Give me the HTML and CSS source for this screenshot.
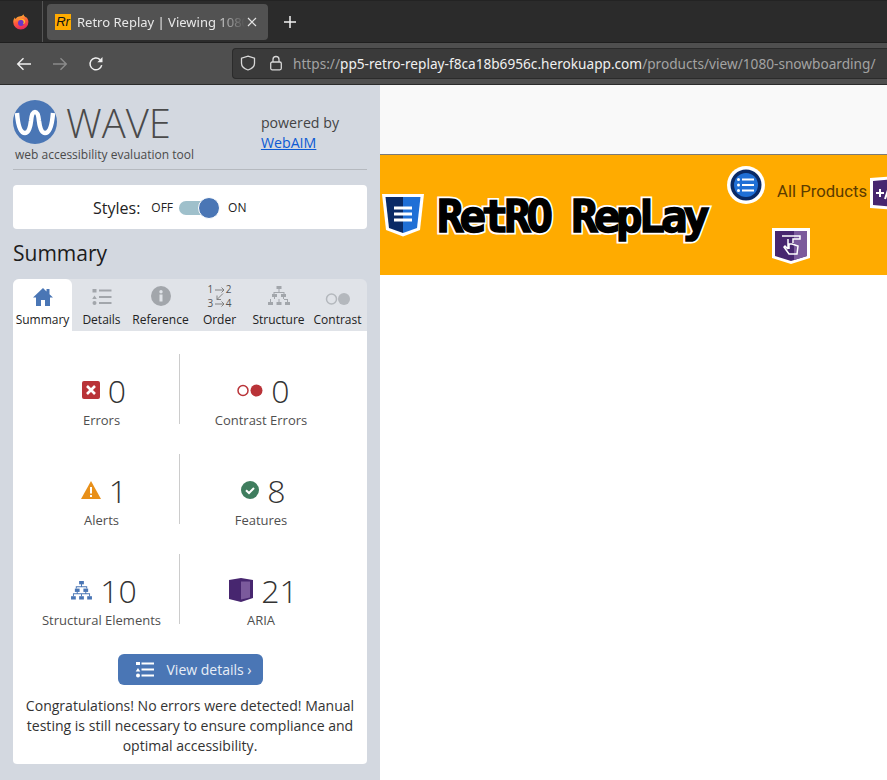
FILE: index.html
```html
<!DOCTYPE html>
<html lang="en">
<head>
    <meta charset="UTF-8">
    <title>Retro Replay | Viewing 1080 Snowboarding</title>
    <link rel="stylesheet" href="styles.css">
</head>
<body>
    <div class="tabbar">
        <div class="ff-slot">
            <svg width="16" height="16" viewBox="0 0 16 16">
                <defs>
                    <linearGradient id="ffg" x1="0.3" y1="0" x2="0.6" y2="1">
                        <stop offset="0" stop-color="#ffc12e"/>
                        <stop offset="0.5" stop-color="#ff5a3c"/>
                        <stop offset="1" stop-color="#e5235f"/>
                    </linearGradient>
                </defs>
                <path d="M10.500 0.300c.2 1.500 1.200 2 2.200 3 .5-.1.9.1 1.200.5.9 1.300 1.500 2.700 1.500 4.200a7.600 7.600 0 0 1-15.200 0c0-1.800.7-3.600 1.700-4.600.1.800.4 1.300.8 1.500.8-1.300 2-2 3.400-2.300 1.500-.3 3.500-.5 4.400-2.300z" fill="url(#ffg)"/>
                <circle cx="8" cy="9" r="3" fill="#6a35c9"/>
                <path d="M4.500 6.500c1.500-1.300 4.300-1.500 5.700.3.800 1 .6 2.700-.6 3.400 1.800-.1 2.700-1.500 2.500-3.200C11 4.500 6.500 4 4.500 6.500z" fill="#ffbd2e"/>
            </svg>
        </div>
        <div class="tab">
            <span class="favicon">Rr</span>
            <span class="tab-title">Retro Replay | Viewing 1080 Snowboarding</span>
            <svg class="tab-close" width="10" height="10" viewBox="0 0 10 10"><path d="M1 1l8 8M9 1l-8 8" stroke="#e4e4e4" stroke-width="1.200"/></svg>
        </div>
        <svg class="tab-new" width="14" height="14" viewBox="0 0 14 14"><path d="M7 1v12M1 7h12" stroke="#f2f2f2" stroke-width="1.500"/></svg>
    </div>

    <div class="toolbar">
        <div class="nav-icons">
            <svg width="16" height="16" viewBox="0 0 16 16"><path d="M15 8H2M7.500 2.200L1.700 8l5.800 5.800" fill="none" stroke="#f0f0f0" stroke-width="1.400"/></svg>
            <svg width="16" height="16" viewBox="0 0 16 16"><path d="M1 8h13M8.500 2.200L14.300 8l-5.800 5.800" fill="none" stroke="#8b8b8b" stroke-width="1.400"/></svg>
            <svg width="16" height="16" viewBox="0 0 16 16"><path d="M13.700 9.200A5.900 5.900 0 1 1 12 3.600" fill="none" stroke="#f0f0f0" stroke-width="1.500"/><path d="M14.500 1v5.200H9.300z" fill="#f0f0f0"/></svg>
        </div>
        <div class="urlbar">
            <svg width="16" height="16" viewBox="0 0 16 16"><path d="M8 1.200l6.500 2v5c0 3.300-3 5.600-6.500 6.800-3.500-1.200-6.500-3.500-6.500-6.800v-5z" fill="none" stroke="#d8d8d8" stroke-width="1.300"/></svg>
            <svg class="lock" width="14" height="16" viewBox="0 0 14 16"><rect x="1.700" y="7" width="10.600" height="7.800" rx="1.500" fill="none" stroke="#d8d8d8" stroke-width="1.300"/><path d="M4 7V4.500a3 3 0 0 1 6 0V7" fill="none" stroke="#d8d8d8" stroke-width="1.300"/></svg>
            <span class="url"><span class="url-dim">https://</span><span class="url-host">pp5-retro-replay-f8ca18b6956c.herokuapp.com</span><span class="url-dim">/products/view/1080-snowboarding/</span></span>
        </div>
    </div>

    <div class="main">
        <aside class="wave">
            <div class="wave-head">
                <div class="wave-brand">
                    <div class="wave-logo">
                        <svg width="44" height="44" viewBox="0 0 44 44">
                            <circle cx="22" cy="22" r="22" fill="#4a76b5"/>
                            <path d="M4 13c1 13 3.500 20 8 20s5.500-8 6-12c.5-5 1.500-9 4-9s3.500 4 4 9c.5 4 1.500 12 6 12s7-7 8-20" fill="none" stroke="#fff" stroke-width="4.500"/>
                        </svg>
                        <span class="wave-name">WAVE</span>
                    </div>
                    <div class="wave-tag">web accessibility evaluation tool</div>
                </div>
                <div class="wave-powered">powered by<br><a href="#">WebAIM</a></div>
            </div>

            <div class="styles-card">
                <span class="styles-label">Styles:</span>
                <span class="styles-state">OFF</span>
                <span class="toggle"><span class="toggle-knob"></span></span>
                <span class="styles-state">ON</span>
            </div>

            <h2 class="panel-title">Summary</h2>

            <div class="tabs">
                <div class="wtab wtab-active">
                    <svg width="20" height="18" viewBox="0 0 20 18"><path d="M10 0L0 9.500h3V18h5v-6h4v6h5V9.500h3l-3.500-3.300V1h-3v2.400z" fill="#4a76b5"/></svg>
                    <span>Summary</span>
                </div>
                <div class="wtab">
                    <svg width="20" height="18" viewBox="0 0 20 18" fill="#a2a6ab"><rect x="0.500" y="1" width="4" height="3.500"/><path d="M2.500 7.500l2.300 3.500H.2z"/><circle cx="2.500" cy="15" r="2"/><rect x="7" y="1.500" width="12.500" height="2"/><rect x="7" y="8" width="12.500" height="2"/><rect x="7" y="14" width="12.500" height="2"/></svg>
                    <span>Details</span>
                </div>
                <div class="wtab">
                    <svg width="20" height="20" viewBox="0 0 20 20"><circle cx="10" cy="10" r="10" fill="#a2a6ab"/><rect x="8.500" y="8.500" width="3" height="7" fill="#e0e3e8"/><circle cx="10" cy="5.700" r="1.700" fill="#e0e3e8"/></svg>
                    <span>Reference</span>
                </div>
                <div class="wtab">
                    <div class="order-icon">
                        <span>1</span><svg width="10" height="6" viewBox="0 0 10 6"><path d="M0 3h9M6.500 .5L9 3 6.500 5.500" fill="none" stroke="#777" stroke-width=".9"/></svg><span>2</span>
                        <svg class="order-cross" width="8" height="7" viewBox="0 0 8 7"><path d="M7 .5L1 6.500M1 2.500v4h4" fill="none" stroke="#777" stroke-width=".9"/></svg>
                        <span>3</span><svg width="10" height="6" viewBox="0 0 10 6"><path d="M0 3h9M6.500 .5L9 3 6.500 5.500" fill="none" stroke="#777" stroke-width=".9"/></svg><span>4</span>
                    </div>
                    <span>Order</span>
                </div>
                <div class="wtab">
                    <svg width="22" height="20" viewBox="0 0 22 20" fill="#a2a6ab"><rect x="8.500" y="0" width="5" height="3"/><rect x="4" y="8" width="5" height="3"/><rect x="13" y="8" width="5" height="3"/><rect x="0" y="16" width="5" height="3"/><rect x="8.500" y="16" width="5" height="3"/><rect x="17" y="16" width="5" height="3"/><path d="M10.500 3h1v3h5v2h-1V7h-9v1h-1V6h5zM6 11h1v2h8v-2h1v2h-4.500v3h-1v-3H7v0H3v3H2v-3h4zM16 13h4v3h-1v-2h-3z"/></svg>
                    <span>Structure</span>
                </div>
                <div class="wtab">
                    <svg width="26" height="14" viewBox="0 0 26 14"><circle cx="6.500" cy="7" r="5" fill="none" stroke="#b4b8bd" stroke-width="1.500"/><circle cx="19" cy="7" r="6" fill="#b4b8bd"/></svg>
                    <span>Contrast</span>
                </div>
            </div>

            <div class="panel">
                <div class="stats">
                    <div class="stat stat-left">
                        <div class="stat-top">
                            <svg width="18" height="18" viewBox="0 0 18 18"><rect width="18" height="18" rx="2" fill="#b93338"/><path d="M5 5l8 8M13 5l-8 8" stroke="#fff" stroke-width="2.600"/></svg>
                            <span class="stat-num">0</span>
                        </div>
                        <div class="stat-label">Errors</div>
                    </div>
                    <div class="stat">
                        <div class="stat-top">
                            <svg width="26" height="13" viewBox="0 0 26 13"><circle cx="6" cy="6.500" r="5" fill="none" stroke="#b93338" stroke-width="1.500"/><circle cx="19.500" cy="6.500" r="6" fill="#b93338"/></svg>
                            <span class="stat-num">0</span>
                        </div>
                        <div class="stat-label">Contrast Errors</div>
                    </div>
                    <div class="stat stat-left">
                        <div class="stat-top">
                            <svg width="20" height="18" viewBox="0 0 20 18"><path d="M10 0l10 18H0z" fill="#e8901a"/><rect x="9" y="6" width="2" height="6.500" fill="#fff"/><rect x="9" y="14" width="2" height="2" fill="#fff"/></svg>
                            <span class="stat-num">1</span>
                        </div>
                        <div class="stat-label">Alerts</div>
                    </div>
                    <div class="stat">
                        <div class="stat-top">
                            <svg width="18" height="18" viewBox="0 0 18 18"><circle cx="9" cy="9" r="9" fill="#3f7d5e"/><path d="M5 9.200l3 2.800 5-5" fill="none" stroke="#fff" stroke-width="2"/></svg>
                            <span class="stat-num">8</span>
                        </div>
                        <div class="stat-label">Features</div>
                    </div>
                    <div class="stat stat-left">
                        <div class="stat-top">
                            <svg width="21" height="19" viewBox="0 0 22 20" fill="#4a76b5"><rect x="8.500" y="0" width="5" height="3.500"/><rect x="4" y="8" width="5" height="3.500"/><rect x="13" y="8" width="5" height="3.500"/><rect x="0" y="16" width="5" height="3.500"/><rect x="8.500" y="16" width="5" height="3.500"/><rect x="17" y="16" width="5" height="3.500"/><path d="M10.500 3h1v2.500h5.500V8h-1V6.500H6V8H5V5.500h5.500zM6 11h1v2h8v-2h1v2h4v3h-1v-2h-7.500v2h-1v-2H3v2H2v-3h4z"/></svg>
                            <span class="stat-num">10</span>
                        </div>
                        <div class="stat-label">Structural Elements</div>
                    </div>
                    <div class="stat">
                        <div class="stat-top">
                            <svg width="24" height="24" viewBox="0 0 24 24"><path d="M0 2l12-2 12 2v18l-12 4-12-3z" fill="#47266f"/><path d="M12 3.500l9 0V19.500l-9 2z" fill="#7b5a9c"/></svg>
                            <span class="stat-num">21</span>
                        </div>
                        <div class="stat-label">ARIA</div>
                    </div>
                </div>

                <div class="details-row">
                    <a class="details-btn" href="#">
                        <svg width="20" height="16" viewBox="0 0 20 16" fill="#fff"><rect x="1" y="0" width="4" height="3"/><path d="M3 6l2.300 3.500H.7z"/><circle cx="3" cy="13.500" r="2"/><rect x="6.500" y="0.500" width="12.500" height="2"/><rect x="6.500" y="6.500" width="12.500" height="2"/><rect x="6.500" y="12.500" width="12.500" height="2"/></svg>
                        <span>View details ›</span>
                    </a>
                </div>
                <p class="congrats">Congratulations! No errors were detected! Manual testing is still necessary to ensure compliance and optimal accessibility.</p>
            </div>
        </aside>

        <div class="page">
            <div class="page-top"></div>
            <header class="site-head">
                <div class="site-logo">
                    <svg width="42" height="43" viewBox="0 0 42 43">
                        <path d="M0 0h42l-4 36-17 6.500L4 36z" fill="#fff"/>
                        <path d="M3.500 3h17.500v36L7 34z" fill="#0a2a66"/>
                        <path d="M21 3h17.500L35 34l-14 5z" fill="#1f6fd6"/>
                        <path d="M12 12.500h18v3H12zM12 18.500h18v3H12zM12 24.500h18v3H12z" fill="#fff"/>
                    </svg>
                    <span class="site-name" data-text="RetRO RepLay">RetRO RepLay</span>
                </div>
                <span class="site-link">All Products</span>
                <svg class="wave-mark mark-list" width="38" height="38" viewBox="0 0 38 38">
                    <circle cx="19" cy="19" r="19" fill="#fff"/>
                    <circle cx="19" cy="19" r="15.500" fill="#0a2a66"/>
                    <circle cx="19" cy="19" r="12" fill="#1f6fd6"/>
                    <path d="M15 12.500h12v2H15zM15 18h12v2H15zM15 23.500h12v2H15z" fill="#fff"/>
                    <circle cx="11.500" cy="13.500" r="1.500" fill="#fff"/><circle cx="11.500" cy="19" r="1.500" fill="#fff"/><circle cx="11.500" cy="24.500" r="1.500" fill="#fff"/>
                </svg>
                <svg class="wave-mark mark-plus" width="38" height="36" viewBox="0 0 38 36">
                    <path d="M0 3l38-3v36L0 33z" fill="#fff"/>
                    <path d="M3 6l32-3v30L3 30z" fill="#47266f"/>
                    <path d="M6 18h8M10 14v8" stroke="#fff" stroke-width="2"/>
                    <path d="M15 24l4-12 4 12" stroke="#fff" stroke-width="2" fill="none"/>
                </svg>
                <svg class="wave-mark mark-touch" width="38" height="38" viewBox="0 0 38 38">
                    <path d="M0 2h38v30l-19 6-19-6z" fill="#fff"/>
                    <path d="M3 5h32v25l-16 5-16-5z" fill="#47266f"/>
                    <path d="M22 5h13v25l-13 4z" fill="#7b5a9c"/>
                    <path d="M10 10h18v3H21v4M16 13v10M16 23l-3-3-1 1 5 7h8l1-8-6-2-3 0v5" fill="none" stroke="#fff" stroke-width="1.500"/>
                </svg>
            </header>
        </div>
    </div>
</body>
</html>
```

FILE: styles.css
```css
* {box-sizing: border-box}
html, body {
    margin: 0;
    padding: 0;
    height: 780px;
    overflow: hidden;
}
body {
    font-family: "Open Sans", Arial, sans-serif;
    background-color: #fff;
    color: #1c1c1c;
}

/* browser chrome */
.tabbar {
    height: 43px;
    background-color: #2b2b2b;
    border-top: 1px solid #232323;
    border-bottom: 1px solid #1f1f1f;
    display: flex;
    align-items: center;
}
.ff-slot {
    width: 43px;
    height: 100%;
    border-right: 1px solid #555;
    display: flex;
    align-items: center;
    justify-content: center;
}
.tab {
    width: 221px;
    height: 36px;
    margin-left: 4px;
    padding: 0 8px;
    background-color: #525252;
    border-radius: 4px;
    display: flex;
    align-items: center;
    color: #e8e8e8;
    font-family: "Noto Sans", sans-serif;
    font-size: 13px;
}
.favicon {
    width: 16px;
    height: 16px;
    flex: none;
    background-color: #ffab00;
    color: #111;
    font-family: "Liberation Sans", sans-serif;
    font-style: italic;
    font-size: 13px;
    line-height: 16px;
    text-align: center;
}
.tab-title {
    margin-left: 6px;
    width: 168px;
    flex: none;
    white-space: nowrap;
    overflow: hidden;
    -webkit-mask-image: linear-gradient(to right, #000 82%, transparent);
    mask-image: linear-gradient(to right, #000 82%, transparent);
}
.tab-close {
    margin-left: 2px;
    flex: none;
}
.tab-new {
    margin-left: 15px;
}
.toolbar {
    height: 42px;
    background-color: #4f4f4f;
    display: flex;
    align-items: center;
    border-bottom: 1px solid #2b2b2b;
}
.nav-icons {
    width: 232px;
    flex: none;
    padding-left: 16px;
    display: flex;
    gap: 20px;
}
.urlbar {
    flex: 1;
    height: 31px;
    margin-top: -1px;
    background-color: #3a3a3a;
    border: 1px solid #2b2b2b;
    border-right: none;
    border-radius: 4px 0 0 4px;
    padding-left: 7px;
    display: flex;
    align-items: center;
    overflow: hidden;
}
.lock {
    margin-left: 13px;
}
.url {
    margin-left: 10px;
    font-family: "Noto Sans", sans-serif;
    font-size: 13.650px;
    white-space: nowrap;
}
.url-dim {
    color: #a3a3a3;
}
.url-host {
    color: #f0f0f0;
}

.main {
    display: flex;
    height: 695px;
}

/* WAVE sidebar */
.wave {
    width: 380px;
    flex: none;
    background-color: #d3d8e0;
    padding: 15px 13px 0;
}
.wave-head {
    height: 70px;
    border-bottom: 1px solid #b5b9bf;
    display: flex;
}
.wave-logo {
    display: flex;
    align-items: center;
    height: 44px;
}
.wave-name {
    margin-left: 9px;
    padding-top: 2px;
    font-weight: 300;
    font-size: 40px;
    line-height: 40px;
    color: #4a4a4a;
}
.wave-tag {
    margin-left: 2px;
    margin-top: 3px;
    font-size: 12px;
    line-height: 16px;
    color: #4a4a4a;
}
.wave-powered {
    margin-left: 67px;
    margin-top: 13px;
    font-size: 14.200px;
    line-height: 20px;
    color: #444;
}
.wave-powered a {
    color: #0b5ad4;
}
.styles-card {
    height: 44px;
    margin-top: 15px;
    padding-top: 1px;
    padding-left: 80px;
    background-color: #fff;
    border-radius: 4px;
    display: flex;
    align-items: center;
    color: #222;
}
.styles-label {
    font-size: 16px;
    margin-right: 11px;
}
.styles-state {
    font-size: 12px;
}
.toggle {
    width: 38px;
    height: 14px;
    margin: 0 11px 0 6px;
    background-color: #9fc0cb;
    border-radius: 7px;
    position: relative;
}
.toggle-knob {
    position: absolute;
    right: -3px;
    top: -4px;
    width: 22px;
    height: 22px;
    border-radius: 50%;
    background-color: #4a76b5;
    border: 1px solid #fff;
}
.panel-title {
    margin: 9px 0 11px;
    font-size: 21px;
    line-height: 30px;
    font-weight: 400;
    color: #1c1c1c;
}
.tabs {
    height: 52px;
    display: flex;
    background-color: #e0e3e8;
    border-radius: 6px 6px 0 0;
}
.wtab {
    width: 59px;
    display: flex;
    flex-direction: column;
    align-items: center;
    justify-content: flex-end;
    font-size: 12px;
    line-height: 16px;
    padding-bottom: 3px;
    color: #222;
    white-space: nowrap;
}
.wtab svg {
    margin-bottom: 6px;
}
.wtab-active {
    background-color: #fff;
    border-radius: 6px 6px 0 0;
}
.order-icon {
    width: 24px;
    margin-bottom: 5px;
    display: flex;
    flex-wrap: wrap;
    justify-content: space-between;
    align-items: center;
    font-size: 10px;
    line-height: 7px;
    color: #555;
}
.order-icon svg {
    margin: 0;
}
.order-icon .order-cross {
    margin: 0 8px;
}
.panel {
    height: 433px;
    background-color: #fff;
    border-radius: 0 0 4px 4px;
    padding-top: 23px;
}
.stats {
    display: grid;
    grid-template-columns: 167px 162px;
    grid-auto-rows: 70px;
    row-gap: 30px;
}
.stat {
    display: flex;
    flex-direction: column;
    align-items: center;
    padding-top: 18px;
    color: #444;
}
.stat-left {
    border-right: 1px solid #ccc;
    padding-left: 11px;
}
.stat-top {
    height: 36px;
    padding-left: 5px;
    display: flex;
    align-items: center;
    justify-content: center;
    gap: 8px;
}
.stat-num {
    padding-top: 1px;
    font-size: 32px;
    font-weight: 300;
    line-height: 35px;
    color: #333;
}
.stat-label {
    font-size: 13px;
    line-height: 18px;
    margin-top: 3px;
    white-space: nowrap;
    color: #4f4f4f;
}
.details-row {
    margin-top: 30px;
    display: flex;
    justify-content: center;
}
.details-btn {
    width: 145px;
    height: 31px;
    background-color: #4a76b5;
    border-radius: 6px;
    color: #e8eef7;
    font-size: 14px;
    text-decoration: none;
    display: flex;
    align-items: center;
    padding-left: 17px;
    gap: 12px;
}
.congrats {
    margin: 11px 0 0;
    padding: 0 10px;
    text-align: center;
    font-size: 14.050px;
    line-height: 20px;
    color: #333;
}

/* page behind the sidebar */
.page {
    flex: 1;
    min-width: 0;
    overflow: hidden;
}
.page-top {
    height: 70px;
    background-color: #f9f9f9;
    border-bottom: 1px solid #7a7a7a;
}
.site-head {
    height: 120px;
    background-color: #ffab00;
    position: relative;
    display: flex;
}
.site-logo {
    margin-left: 2px;
    margin-top: 39px;
    display: flex;
    align-items: flex-start;
    gap: 13px;
}
.site-name {
    position: relative;
    z-index: 0;
    font-family: "DejaVu Sans Mono", monospace;
    font-weight: 700;
    font-size: 44px;
    line-height: 46px;
    letter-spacing: -4.100px;
    white-space: nowrap;
    color: #000;
    -webkit-text-stroke: 1.500px #000;
}
/* white outline behind the black letters */
.site-name::before {
    content: attr(data-text);
    position: absolute;
    left: 0;
    top: 0;
    z-index: -1;
    color: #fff;
    -webkit-text-stroke: 5px #fff;
}
.site-link {
    position: absolute;
    left: 397px;
    top: 27px;
    font-family: "Roboto", sans-serif;
    font-size: 16.700px;
    color: #5c3c00;
    white-space: nowrap;
}
.wave-mark {
    position: absolute;
}
.mark-list {
    left: 347px;
    top: 11px;
}
.mark-plus {
    left: 490px;
    top: 20px;
}
.mark-touch {
    left: 392px;
    top: 71px;
}
```
